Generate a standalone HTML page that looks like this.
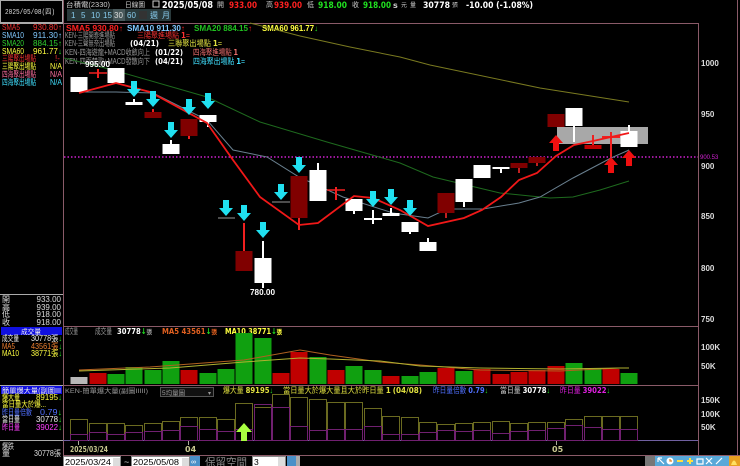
<!DOCTYPE html>
<html><head><meta charset="utf-8"><style>
html,body{margin:0;padding:0;background:#000;width:740px;height:466px;overflow:hidden}
svg{display:block}
text{font-family:"Liberation Sans","Noto Sans CJK TC",sans-serif;font-size:8px}
.b{font-family:"DejaVu Sans","Liberation Sans",sans-serif;font-weight:bold}
.m{font-family:"Liberation Mono","Noto Sans CJK TC",monospace}
</style></head><body>
<svg width="740" height="466" viewBox="0 0 740 466" xmlns="http://www.w3.org/2000/svg">
<rect width="740" height="466" fill="#000"/>
<g stroke="#8a5a68" stroke-width="1" fill="none">
<line x1="63.5" y1="0" x2="63.5" y2="456"/>
<line x1="63" y1="23.5" x2="698" y2="23.5"/>
<line x1="698.5" y1="23" x2="698.5" y2="456"/>
<line x1="63" y1="326.5" x2="698" y2="326.5"/>
<line x1="63" y1="385.5" x2="698" y2="385.5"/>
<line x1="63" y1="455.5" x2="740" y2="455.5"/>
<line x1="737.5" y1="0" x2="737.5" y2="456"/>
</g>
<line x1="63" y1="440.5" x2="698" y2="440.5" stroke="#7060a0"/>
<!-- left panel -->
<g stroke="#aaa" fill="none"><rect x="0.5" y="0.5" width="62" height="22"/><line x1="0" y1="23.5" x2="63" y2="23.5"/><line x1="0" y1="294.5" x2="63" y2="294.5"/><line x1="0" y1="385.5" x2="63" y2="385.5"/><line x1="0" y1="440.5" x2="63" y2="440.5"/></g>
<text x="5" y="14" fill="#ddd" class="m" style="font-size:7px" textLength="50" lengthAdjust="spacingAndGlyphs">2025/05/08(四)</text>
<g class="m" style="font-size:7px">
<text x="2" y="30" fill="#f03030" textLength="18" lengthAdjust="spacingAndGlyphs">SMA5</text><text x="33" y="30" fill="#f03030" textLength="29" lengthAdjust="spacingAndGlyphs">930.80↑</text>
<text x="2" y="38" fill="#80c8ff" textLength="22" lengthAdjust="spacingAndGlyphs">SMA10</text><text x="33" y="38" fill="#80c8ff" textLength="29" lengthAdjust="spacingAndGlyphs">911.30↑</text>
<text x="2" y="46" fill="#30d030" textLength="22" lengthAdjust="spacingAndGlyphs">SMA20</text><text x="33" y="46" fill="#30d030" textLength="29" lengthAdjust="spacingAndGlyphs">884.15↑</text>
<text x="2" y="54" fill="#ffff40" textLength="22" lengthAdjust="spacingAndGlyphs">SMA60</text><text x="33" y="54" fill="#ffff40" textLength="29" lengthAdjust="spacingAndGlyphs">961.77<tspan fill="#20e020">↓</tspan></text>
<text x="2" y="61" fill="#f03030" textLength="34" lengthAdjust="spacingAndGlyphs">三陽聚出場點</text><text x="55" y="61" fill="#f03030">!-</text>
<text x="2" y="69" fill="#ffff40" textLength="34" lengthAdjust="spacingAndGlyphs">三陽聚出場點</text><text x="50" y="69" fill="#ffff40" textLength="12" lengthAdjust="spacingAndGlyphs">N/A</text>
<text x="2" y="77" fill="#ff70a0" textLength="34" lengthAdjust="spacingAndGlyphs">四海聚出場點</text><text x="50" y="77" fill="#ff70a0" textLength="12" lengthAdjust="spacingAndGlyphs">N/A</text>
<text x="2" y="85" fill="#40e0ff" textLength="34" lengthAdjust="spacingAndGlyphs">四海聚出場點</text><text x="50" y="85" fill="#40e0ff" textLength="12" lengthAdjust="spacingAndGlyphs">N/A</text>
<text x="2" y="302" fill="#ddd">開</text><text x="61" y="302" fill="#ddd" text-anchor="end">933.00</text>
<text x="2" y="310" fill="#ddd">高</text><text x="61" y="310" fill="#ddd" text-anchor="end">939.00</text>
<text x="2" y="317" fill="#ddd">低</text><text x="61" y="317" fill="#ddd" text-anchor="end">918.00</text>
<text x="2" y="325" fill="#ddd">收</text><text x="61" y="325" fill="#ddd" text-anchor="end">918.00</text>
</g>
<rect x="1" y="327" width="61" height="8" fill="#1010e0"/>
<text x="21" y="334" fill="#eee" style="font-size:7px" textLength="20" lengthAdjust="spacingAndGlyphs">成交量</text>
<g class="m" style="font-size:7px">
<text x="2" y="341" fill="#eee" textLength="17" lengthAdjust="spacingAndGlyphs">成交量</text><text x="31" y="341" fill="#eee" textLength="31" lengthAdjust="spacingAndGlyphs">30778張<tspan fill="#20e020">↓</tspan></text>
<text x="2" y="349" fill="#f08030" textLength="13" lengthAdjust="spacingAndGlyphs">MA5</text><text x="31" y="349" fill="#f08030" textLength="31" lengthAdjust="spacingAndGlyphs">43561張<tspan fill="#20e020">↓</tspan></text>
<text x="2" y="356" fill="#ffff40" textLength="17" lengthAdjust="spacingAndGlyphs">MA10</text><text x="31" y="356" fill="#ffff40" textLength="31" lengthAdjust="spacingAndGlyphs">38771張<tspan fill="#20e020">↓</tspan></text>
</g>
<rect x="1" y="386" width="61" height="8" fill="#1010e0"/>
<text x="2" y="393" fill="#eee" style="font-size:7px" textLength="59" lengthAdjust="spacingAndGlyphs">簡單爆大量(副圖III</text>
<g class="m" style="font-size:7px">
<text x="2" y="400" fill="#ffff40" textLength="18" lengthAdjust="spacingAndGlyphs">爆大量</text><text x="36" y="400" fill="#ffff40" textLength="26" lengthAdjust="spacingAndGlyphs">89195<tspan fill="#20e020">↓</tspan></text>
<text x="2" y="407" fill="#ffff40" textLength="44" lengthAdjust="spacingAndGlyphs">當日量大於爆...</text>
<text x="2" y="415" fill="#5070ff" textLength="30" lengthAdjust="spacingAndGlyphs">昨日量倍數</text><text x="40" y="415" fill="#5070ff" textLength="22" lengthAdjust="spacingAndGlyphs">0.79<tspan fill="#20e020">↓</tspan></text>
<text x="2" y="422" fill="#eee" textLength="18" lengthAdjust="spacingAndGlyphs">當日量</text><text x="36" y="422" fill="#eee" textLength="26" lengthAdjust="spacingAndGlyphs">30778<tspan fill="#20e020">↓</tspan></text>
<text x="2" y="430" fill="#ff40ff" textLength="18" lengthAdjust="spacingAndGlyphs">昨日量</text><text x="36" y="430" fill="#ff40ff" textLength="26" lengthAdjust="spacingAndGlyphs">39022<tspan fill="#20e020">↓</tspan></text>
<text x="2" y="449" fill="#ddd" textLength="12" lengthAdjust="spacingAndGlyphs">爆跌</text>
<text x="2" y="456" fill="#ddd">量</text><text x="34" y="456" fill="#ddd" textLength="27" lengthAdjust="spacingAndGlyphs">30778張</text>
</g>
<!-- header -->
<text x="66" y="7" fill="#ccc" style="font-size:7px" textLength="44" lengthAdjust="spacingAndGlyphs">台積電(2330)</text>
<text x="125" y="7" fill="#ccc" style="font-size:7px" textLength="20" lengthAdjust="spacingAndGlyphs">日線圖</text>
<rect x="153" y="1" width="6" height="6" fill="none" stroke="#ccc"/>
<text x="162" y="8" fill="#fff" class="b" style="font-size:9.5px" textLength="51" lengthAdjust="spacingAndGlyphs">2025/05/08</text>
<text x="217" y="7" fill="#ccc" style="font-size:7px">開</text><text x="229" y="8" fill="#ff2020" class="b" style="font-size:9px" textLength="28" lengthAdjust="spacingAndGlyphs">933.00</text>
<text x="266" y="7" fill="#ccc" style="font-size:7px">高</text><text x="274" y="8" fill="#ff2020" class="b" style="font-size:9px" textLength="28" lengthAdjust="spacingAndGlyphs">939.00</text>
<text x="307" y="7" fill="#ccc" style="font-size:7px">低</text><text x="318" y="8" fill="#20e020" class="b" style="font-size:9px" textLength="29" lengthAdjust="spacingAndGlyphs">918.00</text>
<text x="352" y="7" fill="#ccc" style="font-size:7px">收</text><text x="363" y="8" fill="#20e020" class="b" style="font-size:9px" textLength="28" lengthAdjust="spacingAndGlyphs">918.00</text>
<text x="393" y="8" fill="#ccc" class="b" style="font-size:8px">s</text><text x="401" y="7" fill="#ccc" style="font-size:6px">元</text>
<text x="410" y="7" fill="#ccc" style="font-size:6px">量</text><text x="423" y="8" fill="#fff" class="b" style="font-size:9px" textLength="27" lengthAdjust="spacingAndGlyphs">30778</text><text x="452" y="7" fill="#ccc" style="font-size:6px">張</text>
<text x="466" y="8" fill="#fff" class="b" style="font-size:9px" textLength="67" lengthAdjust="spacingAndGlyphs">-10.00 (-1.08%)</text>
<g style="font-size:7px">
<rect x="67" y="9" width="104" height="12" fill="#2a3a3c"/>
<text x="71" y="18" fill="#8ce">1</text><text x="81" y="18" fill="#8ce">5</text><text x="91" y="18" fill="#8ce">10</text><text x="103" y="18" fill="#8ce">15</text>
<rect x="113" y="9" width="12" height="12" fill="#4a5a5c"/><text x="114" y="18" fill="#ddd">30</text>
<text x="127" y="18" fill="#8ce">60</text><rect x="139" y="11" width="8" height="8" fill="#333"/>
<text x="150" y="18" fill="#8ce">週</text><text x="162" y="18" fill="#8ce">月</text>
</g>
<g class="b" style="font-size:8px">
<text x="66" y="31" fill="#ff2020" textLength="57" lengthAdjust="spacingAndGlyphs">SMA5 930.80↑</text>
<text x="127" y="31" fill="#80c8ff" textLength="58" lengthAdjust="spacingAndGlyphs">SMA10 911.30<tspan fill="#ff2020">↑</tspan></text>
<text x="194" y="31" fill="#20c020" textLength="58" lengthAdjust="spacingAndGlyphs">SMA20 884.15<tspan fill="#ff2020">↑</tspan></text>
<text x="262" y="31" fill="#ffff40" textLength="56" lengthAdjust="spacingAndGlyphs">SMA60 961.77<tspan fill="#20e020">↓</tspan></text>
</g>
<g style="font-size:6.5px">
<text x="65" y="38" fill="#999" textLength="50" lengthAdjust="spacingAndGlyphs">KEN-三陽開泰進場點</text><text x="137" y="38" fill="#f03030" textLength="53" lengthAdjust="spacingAndGlyphs">三陽聚進場點 <tspan class="b" fill="#ff3030">1</tspan>=</text>
<text x="65" y="46" fill="#999" textLength="50" lengthAdjust="spacingAndGlyphs">KEN-三聲無奈出場點</text><text x="130" y="46" fill="#fff" class="b" textLength="29" lengthAdjust="spacingAndGlyphs">(04/21)</text><text x="168" y="46" fill="#e0e040" textLength="54" lengthAdjust="spacingAndGlyphs">三聯聚出場點 <tspan class="b">1</tspan>=</text>
<text x="65" y="55" fill="#999" textLength="85" lengthAdjust="spacingAndGlyphs">KEN-四海遊龍+MACD收斂向上</text><text x="155" y="55" fill="#fff" class="b" textLength="28" lengthAdjust="spacingAndGlyphs">(01/22)</text><text x="193" y="55" fill="#f07070" textLength="45" lengthAdjust="spacingAndGlyphs">四海聚進場點 <tspan class="b">1</tspan></text>
<text x="65" y="64" fill="#999" textLength="85" lengthAdjust="spacingAndGlyphs">KEN-四面楚歌+MACD發散向下</text><text x="155" y="64" fill="#fff" class="b" textLength="28" lengthAdjust="spacingAndGlyphs">(04/21)</text><text x="193" y="64" fill="#40e0ff" textLength="52" lengthAdjust="spacingAndGlyphs">四海聚出場點 <tspan class="b">1</tspan>=</text>
</g>
<!-- price axis -->
<g class="b" style="font-size:8px" fill="#ddd">
<text x="701" y="66">1000</text><text x="701" y="117">950</text><text x="701" y="169">900</text><text x="701" y="219">850</text><text x="701" y="271">800</text><text x="701" y="322">750</text>
<text x="701" y="350">100K</text><text x="701" y="369">50K</text>
<text x="701" y="403">150K</text><text x="701" y="417">100K</text><text x="701" y="430">50K</text>
</g>
<line x1="64" y1="157" x2="698" y2="157" stroke="#d020d0" stroke-width="1.5" stroke-dasharray="1.5,2"/>
<text x="700" y="159" fill="#d020d0" style="font-size:6px">900.53</text>
<g fill="none" stroke-width="1">
<polyline stroke="#7a7a20" points="250,23 300,36 350,47 400,57 430,65 540,88 629,102"/>
<polyline stroke="#1e6a1e" points="64,58 113,70 207,97 260,122 327,142 400,163 433,177 500,193 550,198 573,197 600,190 629,181"/>
<polyline stroke="#6a8090" points="79,92 116,92 153,93 207,120 233,150 267,157 299,177 343,197 393,213 428,218 447,209 483,209 519,203 540,197 573,178 611,158 629,150"/>
</g>
<rect x="557" y="127" width="91" height="17" fill="#a8a8a8"/>
<g>
<rect x="70.5" y="77" width="17" height="15" fill="#fff"/>
<line x1="98" y1="69" x2="98" y2="78" stroke="#f02020" stroke-width="2"/><line x1="89" y1="73" x2="107" y2="73" stroke="#f02020" stroke-width="1.5"/>
<rect x="107.5" y="68" width="17" height="15" fill="#fff"/>
<rect x="125.5" y="102" width="17" height="3" fill="#fff"/><line x1="134" y1="99" x2="134" y2="102" stroke="#fff" stroke-width="2"/>
<rect x="144.5" y="112" width="17" height="6" fill="#800000"/><line x1="153" y1="109" x2="153" y2="112" stroke="#f02020" stroke-width="2"/>
<rect x="162.5" y="144" width="17" height="10" fill="#fff"/><line x1="171" y1="140" x2="171" y2="144" stroke="#fff" stroke-width="2"/>
<rect x="180.5" y="119" width="17" height="17" fill="#800000"/><line x1="189" y1="136" x2="189" y2="139" stroke="#f02020" stroke-width="2"/>
<rect x="199.5" y="115" width="17" height="7" fill="#fff"/><line x1="208" y1="122" x2="208" y2="127" stroke="#fff" stroke-width="2"/>
<line x1="218" y1="218" x2="235" y2="218" stroke="#999"/>
<rect x="235.5" y="251" width="17" height="20" fill="#800000"/><line x1="244" y1="223" x2="244" y2="251" stroke="#f02020" stroke-width="2"/>
<rect x="254.5" y="258" width="17" height="25" fill="#fff"/><line x1="263" y1="241" x2="263" y2="288" stroke="#fff" stroke-width="2"/>
<line x1="272" y1="202" x2="290" y2="202" stroke="#999"/>
<rect x="290.5" y="176" width="17" height="42" fill="#800000"/><line x1="299" y1="218" x2="299" y2="230" stroke="#f02020" stroke-width="2"/>
<rect x="309.5" y="170" width="17" height="31" fill="#fff"/><line x1="318" y1="163" x2="318" y2="170" stroke="#fff" stroke-width="2"/>
<line x1="327" y1="190" x2="345" y2="190" stroke="#f02020" stroke-width="1.5"/><line x1="336" y1="187" x2="336" y2="200" stroke="#f02020" stroke-width="2"/>
<rect x="345.5" y="199" width="17" height="12" fill="#fff"/><line x1="354" y1="211" x2="354" y2="214" stroke="#fff" stroke-width="2"/>
<line x1="364" y1="219" x2="382" y2="219" stroke="#fff" stroke-width="2"/><line x1="373" y1="210" x2="373" y2="224" stroke="#fff" stroke-width="2"/>
<rect x="382.5" y="213" width="17" height="3" fill="#fff"/><line x1="391" y1="208" x2="391" y2="213" stroke="#fff" stroke-width="2"/>
<rect x="401.5" y="222" width="17" height="10" fill="#fff"/><line x1="410" y1="232" x2="410" y2="234" stroke="#fff" stroke-width="2"/>
<rect x="419.5" y="242" width="17" height="9" fill="#fff"/><line x1="428" y1="238" x2="428" y2="242" stroke="#fff" stroke-width="2"/>
<rect x="437.5" y="193" width="17" height="20" fill="#800000"/><line x1="446" y1="213" x2="446" y2="218" stroke="#c02020" stroke-width="2"/>
<rect x="455.5" y="179" width="17" height="23" fill="#fff"/><line x1="464" y1="202" x2="464" y2="207" stroke="#fff" stroke-width="2"/>
<rect x="473.5" y="165" width="17" height="13" fill="#fff"/>
<rect x="492.5" y="167" width="17" height="2" fill="#fff"/><line x1="501" y1="169" x2="501" y2="173" stroke="#fff" stroke-width="2"/>
<rect x="510.5" y="163" width="17" height="5" fill="#800000"/><line x1="519" y1="168" x2="519" y2="173" stroke="#c02020" stroke-width="2"/>
<rect x="528.5" y="157" width="17" height="6" fill="#800000"/><line x1="537" y1="163" x2="537" y2="166" stroke="#c02020" stroke-width="2"/>
<rect x="547.5" y="114" width="17" height="13" fill="#800000"/>
<rect x="565.5" y="108" width="17" height="18" fill="#fff"/><line x1="574" y1="126" x2="574" y2="142" stroke="#fff" stroke-width="2"/>
<rect x="584.5" y="145" width="17" height="4" fill="#c00000"/><line x1="593" y1="135" x2="593" y2="145" stroke="#f02020" stroke-width="2"/>
<line x1="602" y1="137" x2="620" y2="137" stroke="#f02020" stroke-width="2"/><line x1="611" y1="132" x2="611" y2="157" stroke="#f02020" stroke-width="2"/>
<rect x="620.5" y="131" width="17" height="16" fill="#fff"/><line x1="629" y1="125" x2="629" y2="131" stroke="#fff" stroke-width="2"/>
</g>
<polyline fill="none" stroke="#f01818" stroke-width="1.8" points="79,93 116,83 150,92 207,123 233,160 260,197 299,225 318,223 354,196 373,198 400,210 428,226 464,218 482,210 501,197 519,180 537,173 556,156 574,145 593,141 611,137 629,133"/>
<defs>
<path id="da" d="M-3,0 H3 V8 H7 L0,16 L-7,8 H-3 Z" fill="#20e0f0"/>
<path id="ua" d="M-3,16 H3 V8 H7 L0,0 L-7,8 H-3 Z" fill="#f01010"/>
</defs>
<use href="#da" x="134" y="81"/><use href="#da" x="153" y="91"/><use href="#da" x="171" y="122"/><use href="#da" x="189" y="99"/><use href="#da" x="208" y="93"/>
<use href="#da" x="226" y="200"/><use href="#da" x="244" y="205"/><use href="#da" x="263" y="222"/><use href="#da" x="281" y="184"/><use href="#da" x="299" y="157"/>
<use href="#da" x="373" y="191"/><use href="#da" x="391" y="189"/><use href="#da" x="410" y="200"/>
<use href="#ua" x="556" y="135"/><use href="#ua" x="611" y="157"/><use href="#ua" x="629" y="150"/>
<g class="b" style="font-size:8px" fill="#fff"><text x="85" y="67" textLength="25" lengthAdjust="spacingAndGlyphs">995.00</text><text x="250" y="295" textLength="25" lengthAdjust="spacingAndGlyphs">780.00</text></g>
<!-- volume header -->
<g style="font-size:6.5px">
<text x="65" y="334" fill="#999" textLength="13" lengthAdjust="spacingAndGlyphs">成交量</text><text x="95" y="334" fill="#999" textLength="17" lengthAdjust="spacingAndGlyphs">成交量</text>
<text x="117" y="334" fill="#fff" class="b" style="font-size:8px" textLength="35" lengthAdjust="spacingAndGlyphs">30778<tspan fill="#20e020">↓</tspan><tspan fill="#999" style="font-size:6.5px">張</tspan></text>
<text x="162" y="334" fill="#e06020" class="b" style="font-size:8px" textLength="55" lengthAdjust="spacingAndGlyphs">MA5 43561<tspan fill="#20e020">↓</tspan><tspan style="font-size:6.5px">張</tspan></text>
<text x="225" y="334" fill="#ffff40" class="b" style="font-size:8px" textLength="57" lengthAdjust="spacingAndGlyphs">MA10 38771<tspan fill="#20e020">↓</tspan><tspan style="font-size:6.5px">張</tspan></text>
</g>
<g>
<rect x="70.5" y="377" width="17" height="7" fill="#b8b8b8"/>
<rect x="89.5" y="373" width="17" height="11" fill="#c00000"/>
<rect x="107.5" y="374" width="17" height="10" fill="#10a010"/>
<rect x="125.5" y="367" width="17" height="17" fill="#10a010"/>
<rect x="144.5" y="370" width="17" height="14" fill="#10a010"/>
<rect x="162.5" y="361" width="17" height="23" fill="#10a010"/>
<rect x="180.5" y="370" width="17" height="14" fill="#c00000"/>
<rect x="199.5" y="373" width="17" height="11" fill="#10a010"/>
<rect x="217.5" y="369" width="17" height="15" fill="#10a010"/>
<rect x="235.5" y="333" width="17" height="51" fill="#10a010"/>
<rect x="254.5" y="338" width="17" height="46" fill="#10a010"/>
<rect x="272.5" y="373" width="17" height="11" fill="#c00000"/>
<rect x="290.5" y="352" width="17" height="32" fill="#c00000"/>
<rect x="309.5" y="357" width="17" height="27" fill="#10a010"/>
<rect x="327.5" y="370" width="17" height="14" fill="#c00000"/>
<rect x="345.5" y="366" width="17" height="18" fill="#10a010"/>
<rect x="364.5" y="370" width="17" height="14" fill="#10a010"/>
<rect x="382.5" y="376" width="17" height="8" fill="#c00000"/>
<rect x="401.5" y="376" width="17" height="8" fill="#10a010"/>
<rect x="419.5" y="372" width="17" height="12" fill="#10a010"/>
<rect x="437.5" y="368" width="17" height="16" fill="#c00000"/>
<rect x="455.5" y="371" width="17" height="13" fill="#10a010"/>
<rect x="473.5" y="369" width="17" height="15" fill="#c00000"/>
<rect x="492.5" y="374" width="17" height="10" fill="#c00000"/>
<rect x="510.5" y="372" width="17" height="12" fill="#c00000"/>
<rect x="528.5" y="370" width="17" height="14" fill="#c00000"/>
<rect x="547.5" y="366" width="17" height="18" fill="#c00000"/>
<rect x="565.5" y="363" width="17" height="21" fill="#10a010"/>
<rect x="584.5" y="368" width="17" height="16" fill="#10a010"/>
<rect x="602.5" y="369" width="17" height="15" fill="#c00000"/>
<rect x="620.5" y="373" width="17" height="11" fill="#10a010"/>
</g>
<polyline fill="none" stroke="#b06020" points="79,370 150,367 244,360 300,350 330,355 380,362 420,365 480,370 560,371 620,368 629,368"/>
<polyline fill="none" stroke="#b0b030" points="79,371 170,368 244,362 300,358 330,359 380,361 420,366 480,368 560,369 620,368 629,368"/>
<!-- burst header -->
<text x="65" y="393" fill="#999" style="font-size:6.5px" textLength="83" lengthAdjust="spacingAndGlyphs">KEN-簡單爆大量(副圖IIIII)</text>
<rect x="160.5" y="387.5" width="53" height="9" fill="#111" stroke="#555"/>
<text x="162" y="395" fill="#999" style="font-size:6.5px">5均量圖</text><text x="208" y="395" fill="#999" style="font-size:6px">▾</text>
<g style="font-size:6.5px">
<text x="223" y="393" fill="#e0e040" textLength="50" lengthAdjust="spacingAndGlyphs">爆大量 <tspan class="b" style="font-size:8px">89195</tspan><tspan fill="#20e020">↓</tspan></text>
<text x="283" y="393" fill="#e0e040" textLength="139" lengthAdjust="spacingAndGlyphs">當日量大於爆大量且大於昨日量 <tspan class="b">1</tspan>  <tspan class="b">(04/08)</tspan></text>
<text x="433" y="393" fill="#5070ff" textLength="55" lengthAdjust="spacingAndGlyphs">昨日量倍數 <tspan class="b" style="font-size:8px">0.79</tspan><tspan fill="#20e020">↓</tspan></text>
<text x="500" y="393" fill="#ccc" textLength="50" lengthAdjust="spacingAndGlyphs">當日量 <tspan class="b" fill="#fff" style="font-size:8px">30778</tspan><tspan fill="#20e020">↓</tspan></text>
<text x="560" y="393" fill="#e020e0" textLength="50" lengthAdjust="spacingAndGlyphs">昨日量 <tspan class="b" style="font-size:8px">39022</tspan><tspan fill="#20e020">↓</tspan></text>
</g>
<g fill="none" stroke="#6a6a20">
<rect x="70.5" y="419.5" width="17" height="21"/><rect x="89.5" y="423.5" width="17" height="17"/><rect x="107.5" y="423.5" width="17" height="17"/><rect x="125.5" y="425.5" width="17" height="15"/><rect x="144.5" y="423.5" width="17" height="17"/><rect x="162.5" y="421.5" width="17" height="19"/><rect x="180.5" y="417.5" width="17" height="23"/><rect x="199.5" y="417.5" width="17" height="23"/><rect x="217.5" y="419.5" width="17" height="21"/><rect x="235.5" y="403.5" width="17" height="37"/><rect x="254.5" y="407.5" width="17" height="33"/><rect x="272.5" y="394.5" width="17" height="46"/><rect x="290.5" y="397.5" width="17" height="43"/><rect x="309.5" y="399.5" width="17" height="41"/><rect x="327.5" y="402.5" width="17" height="38"/><rect x="345.5" y="402.5" width="17" height="38"/><rect x="364.5" y="408.5" width="17" height="32"/><rect x="382.5" y="416.5" width="17" height="24"/><rect x="401.5" y="417.5" width="17" height="23"/><rect x="419.5" y="422.5" width="17" height="18"/><rect x="437.5" y="424.5" width="17" height="16"/><rect x="455.5" y="423.5" width="17" height="17"/><rect x="473.5" y="422.5" width="17" height="18"/><rect x="492.5" y="421.5" width="17" height="19"/><rect x="510.5" y="423.5" width="17" height="17"/><rect x="528.5" y="422.5" width="17" height="18"/><rect x="547.5" y="422.5" width="17" height="18"/><rect x="565.5" y="419.5" width="17" height="21"/><rect x="584.5" y="416.5" width="17" height="24"/><rect x="602.5" y="416.5" width="17" height="24"/><rect x="620.5" y="416.5" width="17" height="24"/>
</g>
<g fill="none" stroke="#702070">
<rect x="70.5" y="434.5" width="17" height="6"/><rect x="89.5" y="432.5" width="17" height="8"/><rect x="107.5" y="434.5" width="17" height="6"/><rect x="125.5" y="432.5" width="17" height="8"/><rect x="144.5" y="431.5" width="17" height="9"/><rect x="162.5" y="430.5" width="17" height="10"/><rect x="180.5" y="426.5" width="17" height="14"/><rect x="199.5" y="429.5" width="17" height="11"/><rect x="217.5" y="431.5" width="17" height="9"/><rect x="235.5" y="429.5" width="17" height="11"/><rect x="254.5" y="404.5" width="17" height="36"/><rect x="272.5" y="407.5" width="17" height="33"/><rect x="290.5" y="426.5" width="17" height="14"/><rect x="309.5" y="430.5" width="17" height="10"/><rect x="327.5" y="429.5" width="17" height="11"/><rect x="345.5" y="429.5" width="17" height="11"/><rect x="364.5" y="426.5" width="17" height="14"/><rect x="382.5" y="434.5" width="17" height="6"/><rect x="401.5" y="434.5" width="17" height="6"/><rect x="419.5" y="432.5" width="17" height="8"/><rect x="437.5" y="430.5" width="17" height="10"/><rect x="455.5" y="431.5" width="17" height="9"/><rect x="473.5" y="430.5" width="17" height="10"/><rect x="492.5" y="433.5" width="17" height="7"/><rect x="510.5" y="431.5" width="17" height="9"/><rect x="528.5" y="430.5" width="17" height="10"/><rect x="547.5" y="428.5" width="17" height="12"/><rect x="565.5" y="425.5" width="17" height="15"/><rect x="584.5" y="427.5" width="17" height="13"/><rect x="602.5" y="429.5" width="17" height="11"/><rect x="620.5" y="429.5" width="17" height="11"/>
</g>
<path d="M241,441 H247 V432 H252 L244,423 L236,432 H241 Z" fill="#a8ff40"/>
<line x1="78.5" y1="441" x2="78.5" y2="445" stroke="#aa9"/><line x1="188.5" y1="441" x2="188.5" y2="445" stroke="#aa9"/><line x1="556.5" y1="441" x2="556.5" y2="445" stroke="#aa9"/>
<text x="70" y="452" fill="#c8c890" style="font-size:8px" class="b" textLength="38" lengthAdjust="spacingAndGlyphs">2025/03/24</text>
<text x="185" y="452" fill="#c8c890" style="font-size:8px" class="b">04</text>
<text x="552" y="452" fill="#c8c890" style="font-size:8px" class="b">05</text>
<!-- toolbar -->
<rect x="63.5" y="456.5" width="57" height="10" fill="#fff" stroke="#888"/><text x="65" y="465" fill="#000" style="font-size:8.5px" textLength="46" lengthAdjust="spacingAndGlyphs">2025/03/24</text><rect x="113" y="458" width="7" height="8" fill="#ddd"/>
<text x="124" y="465" fill="#ccc" style="font-size:9px">~</text>
<rect x="131.5" y="456.5" width="58" height="10" fill="#fff" stroke="#888"/><text x="133" y="465" fill="#000" style="font-size:8.5px" textLength="46" lengthAdjust="spacingAndGlyphs">2025/05/08</text><rect x="182" y="458" width="7" height="8" fill="#ddd"/>
<rect x="190" y="456" width="10" height="10" fill="#4a90c8"/><text x="191" y="464" fill="#fff" style="font-size:7px">∞</text>
<text x="205" y="466" fill="#888" style="font-size:11px" textLength="42" lengthAdjust="spacingAndGlyphs">保留空間</text>
<rect x="252.5" y="456.5" width="33" height="10" fill="#fff" stroke="#888"/><text x="254" y="465" fill="#000" style="font-size:8.5px">3</text><rect x="278" y="457" width="7" height="9" fill="#ddd"/>
<rect x="287" y="456" width="9" height="10" fill="#4a90c8"/>
<rect x="296" y="456" width="4" height="10" fill="#aaa"/>
<rect x="645" y="456" width="10" height="10" fill="#777"/>
<rect x="655" y="456" width="85" height="10" fill="#58a8d8"/>
<g stroke="#fff" stroke-width="1.2" fill="none">
<path d="M658,458 L664,464 M658,458 H662 M658,458 V462"/>
<circle cx="670" cy="461" r="3.5" fill="#fff" stroke="none"/><path d="M670,459 V461 H672" stroke="#e08020"/>
<path d="M677,461 H683" stroke="#ffe040" stroke-width="2"/>
<path d="M687,461 H693 M690,458 V464" stroke="#ffe040" stroke-width="2"/>
<path d="M697,459 H703 V464 H697 Z"/>
<path d="M706,458 L712,464 M712,458 L706,464"/>
<path d="M716,464 L722,458"/>
</g>
<rect x="729" y="456" width="11" height="10" fill="#e8a020"/><path d="M731,465 Q734,456 737,465 Z" fill="#ffe060"/>
</svg>
</body></html>
